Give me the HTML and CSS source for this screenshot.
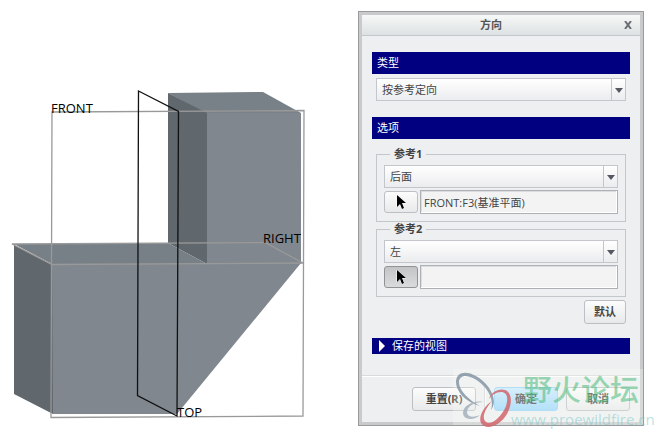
FILE: index.html
```
<!DOCTYPE html>
<html lang="zh-CN">
<head>
    <meta charset="UTF-8">
    <meta name="viewport" content="width=device-width, initial-scale=1.0">
    <title>方向</title>
    <link rel="stylesheet" href="styles.css">
</head>
<body>
    <main class="workspace">
        <svg class="model" viewBox="0 0 346 436" role="img" aria-label="FRONT RIGHT TOP">
            <!-- 实体 -->
            <polygon fill="#788187" points="168,93 263,92 301,113 207,114"/>
            <polygon fill="#60676d" points="168,93 207,113 207,264 168,243"/>
            <polygon fill="#778087" points="14,244 168,243 207,264 52,264"/>
            <polygon fill="#80878e" points="207,113 301,113 301,264 207,264"/>
            <polygon fill="#60676d" points="14,245 53,265 53,414 14,394"/>
            <polygon fill="#80878e" points="52,264 301,263 177,414 53,414"/>

            <!-- 基准平面 -->
            <g class="plane">
                <path d="M52 112L304 110.500L303 416L51 417.500Z"/>
                <path d="M12 244L265 242.500L303 263L52 264.500Z"/>
            </g>
            <path class="plane active" d="M138.500 91L178.500 111.500L177 416L137.500 395.500Z"/>

            <text x="51" y="113">FRONT</text>
            <text x="263" y="243">RIGHT</text>
            <text x="177" y="417">TOP</text>
        </svg>

        <form class="dialog">
            <header class="title-bar">
                <h1>方向</h1>
                <button type="button" class="close" aria-label="关闭">
                    <svg width="8" height="8" viewBox="0 0 8 8"><path d="M1 0L7 8M7 0L1 8"/></svg>
                </button>
            </header>

            <div class="content">
                <h2 class="bar"><label for="type">类型</label></h2>
                <div class="select type-select">
                    <select id="type"><option>按参考定向</option></select>
                </div>

                <h2 class="bar">选项</h2>
                <div class="options">
                    <fieldset>
                        <legend>参考1</legend>
                        <div class="select">
                            <select aria-label="参考1"><option>后面</option></select>
                        </div>
                        <div class="pick-row">
                            <button type="button" class="btn pick" aria-label="选择参考1">
                                <svg width="9" height="15" viewBox="0 0 9 15"><path d="M0 0V12L3 9L5 14L7 13L5 8H9Z"/></svg>
                            </button>
                            <input type="text" value="FRONT:F3(基准平面)" aria-label="参考1基准">
                        </div>
                    </fieldset>
                    <fieldset>
                        <legend>参考2</legend>
                        <div class="select">
                            <select aria-label="参考2"><option>左</option></select>
                        </div>
                        <div class="pick-row">
                            <button type="button" class="btn pick pressed" aria-label="选择参考2">
                                <svg width="9" height="15" viewBox="0 0 9 15"><path d="M0 0V12L3 9L5 14L7 13L5 8H9Z"/></svg>
                            </button>
                            <input type="text" value="" aria-label="参考2基准">
                        </div>
                    </fieldset>
                    <button type="button" class="btn default">默认</button>
                </div>

                <button type="button" class="saved-views">保存的视图</button>
            </div>

            <footer class="actions">
                <button type="reset" class="btn">重置(R)</button>
                <span class="divider"></span>
                <button type="button" class="btn ok">确定</button>
                <button type="button" class="btn">取消</button>
            </footer>

            <div class="watermark">
                <svg width="56" height="56" viewBox="0 0 56 56">
                    <path fill="#8496a4" fill-rule="evenodd" d="M38 41C46 31 36 14 23 7C13 1 3 3 3 13C3 22 12 33 27 37C16 31 5 21 6 12C8 4 18 7 25 12C36 20 41 31 38 41Z"/>
                    <path fill="#a4b1bc" fill-rule="evenodd" d="M30 33C22 31 10 36 10 44C10 51 21 52 27 46C20 49 14 48 14 43C14 37 22 33 30 33Z"/>
                    <path fill="#d2666d" fill-rule="evenodd" d="M36 30C38 23 46 19 52 21C60 24 59 36 54 45C47 57 33 62 28 54C25 48 31 37 39 32C32 40 28 49 33 53C39 57 49 47 53 37C56 27 53 23 48 23C43 23 39 26 36 30Z"/>
                </svg>
                <div class="site">
                    <strong>野火论坛</strong>
                    <span>www.proewildfire.cn</span>
                </div>
            </div>
        </form>
    </main>
</body>
</html>
```
FILE: styles.css
```
* {
    box-sizing: border-box;
}

body {
    margin: 0;
    background-color: #fff;
    color: #444;
    font: 11px/16px "Open Sans", "Noto Sans CJK SC", sans-serif;
}

button, input, select {
    color: inherit;
    font: inherit;
}

h1, h2 {
    margin: 0;
    font-size: 11px;
}

.workspace {
    display: flex;
    align-items: flex-start;
    gap: 12px;
    padding-right: 21px;
}

/* 模型 */
.model {
    flex: 1;
    min-width: 0;
}

.model text {
    fill: #000;
    font-size: 13px;
}

.plane {
    fill: none;
    stroke: #999;
    stroke-width: 1.3;
}

.active {
    stroke: #111;
}

/* 对话框 */
.dialog {
    position: relative;
    width: 43%;
    min-width: 286px;
    margin-top: 11px;
    border: 1px solid #999b9c;
    background-color: #eeeff1;
    box-shadow: inset 0 0 0 3px #c8cacc;
    padding: 3px;
}

.title-bar {
    display: flex;
    align-items: center;
    height: 21px;
    padding-right: 4px;
    border-bottom: 1px solid #c2c7cb;
    background: linear-gradient(#f7f8f8, #dde1e2);
}

.title-bar h1 {
    flex: 1;
    text-align: center;
    color: #555;
}

.close {
    display: flex;
    padding: 4px;
    border: 0;
    background: none;
}

.close path {
    stroke: #6b6d75;
    stroke-width: 2;
}

.content {
    padding: 16px 10px 21px;
}

.bar {
    height: 22px;
    padding: 0 5px;
    background-color: #000080;
    color: #fff;
    font-weight: normal;
    line-height: 22px;
}

.select {
    position: relative;
    height: 23px;
}

.select select {
    appearance: none;
    display: block;
    width: 100%;
    height: 100%;
    padding: 0 20px 0 5px;
    border: 1px solid #c3c7cb;
    border-radius: 0;
    background: linear-gradient(#fff, #ebecee);
}

.select::before {
    content: "";
    position: absolute;
    top: 1px;
    right: 14px;
    bottom: 1px;
    border-left: 1px solid #c3c7cb;
}

.select::after {
    content: "";
    position: absolute;
    top: 10px;
    right: 3px;
    border: 4px solid transparent;
    border-top: 5px solid #555761;
    border-bottom: 0;
}

.type-select {
    margin: 4px 4px 16px;
}

.options {
    display: flex;
    flex-direction: column;
    padding: 8px 4px 14px;
}

fieldset {
    min-width: 0;
    margin: 0;
    padding: 4px 7px 7px;
    border: 1px solid #c3c7cb;
}

legend {
    margin-left: 6px;
    padding: 0 4px;
    font-weight: bold;
    line-height: 14px;
}

.pick-row {
    display: flex;
    align-items: center;
    gap: 2px;
    margin-top: 2px;
}

.pick-row input {
    flex: 1;
    min-width: 0;
    height: 24px;
    padding: 0 3px;
    border: 1px solid #adb0b5;
    background-color: #f3f3f3;
    box-shadow: inset -1px -1px #fff, inset 1px 1px #dcdde0;
}

.btn {
    width: 64px;
    height: 24px;
    padding: 0;
    border: 1px solid #bcbfc3;
    border-radius: 3px;
    background: linear-gradient(#fcfcfc, #e8e9ea);
    font-weight: bold;
}

.pick {
    display: flex;
    align-items: center;
    justify-content: center;
    width: 34px;
    height: 22px;
}

.pick svg {
    overflow: visible;
}

.pick path {
    fill: #000;
    stroke: #fff;
    paint-order: stroke;
}

.pressed {
    border-color: #909295;
    background: linear-gradient(#c3c4c6, #dadbdc);
}

.default {
    align-self: flex-end;
    width: 42px;
    margin-top: 3px;
}

.saved-views {
    display: flex;
    align-items: center;
    width: 100%;
    height: 16px;
    padding: 0 7px;
    border: 0;
    background-color: #000080;
    color: #fff;
}

.saved-views::before {
    content: "";
    margin-right: 7px;
    border: 6px solid transparent;
    border-right: 0;
    border-left-color: #fff;
}

.actions {
    display: flex;
    justify-content: flex-end;
    gap: 8px;
    padding: 11px 10px;
    border-top: 1px solid #d8dadc;
    box-shadow: inset 0 1px #fff;
}

.divider {
    width: 2px;
    border-left: 1px solid #d3d5d7;
    background-color: #fff;
}

.ok {
    border-color: #94d3f5;
    background: linear-gradient(#c8e9ff, #97d5fb);
}

/* 水印 */
.watermark {
    position: absolute;
    right: 0;
    bottom: 0;
    display: flex;
    width: 190px;
    height: 56px;
    background-color: rgba(250, 252, 245, 0.3);
    pointer-events: none;
}

.watermark svg {
    flex: none;
    overflow: visible;
    opacity: 0.85;
}

.site {
    display: flex;
    flex-direction: column;
    white-space: nowrap;
}

.site strong {
    margin-left: 14px;
    color: rgba(70, 185, 120, 0.55);
    font: 500 29px/38px "Noto Sans CJK SC", sans-serif;
}

.site span {
    margin-left: 2px;
    color: rgba(130, 200, 200, 0.55);
    font-size: 15px;
    line-height: 24px;
}
```
